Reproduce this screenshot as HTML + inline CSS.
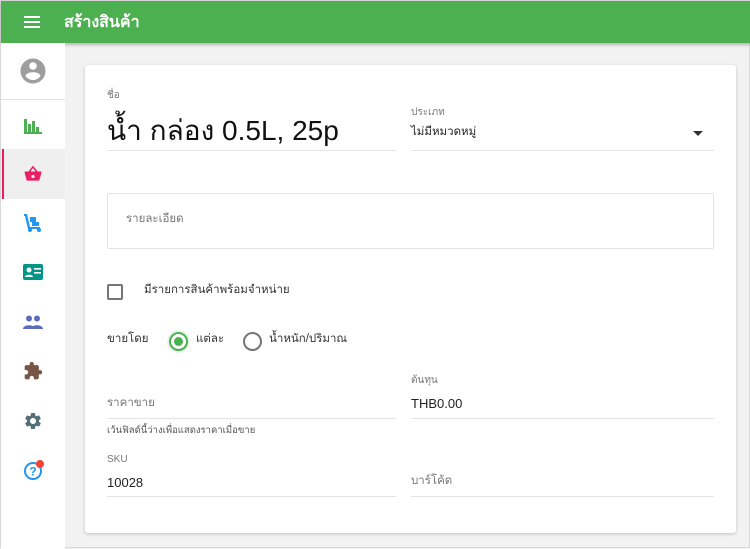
<!DOCTYPE html>
<html><head><meta charset="utf-8"><style>
*{margin:0;padding:0;box-sizing:border-box}
body{width:750px;height:548px;overflow:hidden;background:#f2f2f2;font-family:"Liberation Sans","Noto Sans CJK SC","WenQuanYi Zen Hei",sans-serif;position:relative;border:1px solid #d8d8d8}
.a{position:absolute;white-space:nowrap}
.hdr{left:0;top:0;width:750px;height:42px;background:#4caf50;box-shadow:0 2px 3px rgba(0,0,0,.25)}
.side{left:0;top:42px;width:64px;height:506px;background:#fff}
.card{left:84px;top:64px;width:651px;height:468px;background:#fff;border-radius:3px;box-shadow:0 1px 3px rgba(0,0,0,.2)}
.ul{height:1px;background:#e3e3e3}
.lbl{font-size:10px;color:#777}
.val{font-size:13px;color:#222}
.th{font-size:11.5px;color:#222}
.ph{font-size:11.5px;color:#777}
</style></head><body>
<div class="a hdr"></div>
<svg class="a" style="left:23px;top:14px" width="16" height="14"><rect y="1" width="16" height="2" fill="#fff"/><rect y="6" width="16" height="2" fill="#fff"/><rect y="11" width="16" height="2" fill="#fff"/></svg>
<div class="a" style="left:63px;top:9px;font-size:16px;font-weight:bold;color:#fff">สร้างสินค้า</div>
<div class="a side"></div>
<div class="a" style="left:0;top:98px;width:64px;height:1px;background:#e0e0e0"></div>
<div class="a" style="left:0;top:148px;width:64px;height:50px;background:#efefef"></div>
<div class="a" style="left:1px;top:148px;width:2px;height:50px;background:#e91e63"></div>
<svg class="a" style="left:17px;top:55px" width="30" height="30" viewBox="0 0 24 24"><path fill="#9e9e9e" d="M12 2C6.48 2 2 6.48 2 12s4.48 10 10 10 10-4.48 10-10S17.52 2 12 2zm0 3c1.66 0 3 1.34 3 3s-1.34 3-3 3-3-1.34-3-3 1.34-3 3-3zm0 14.2c-2.5 0-4.710-1.28-6-3.22.03-1.99 4-3.08 6-3.08 1.99 0 5.970 1.09 6 3.08-1.29 1.94-3.5 3.22-6 3.22z"/></svg>
<svg class="a" style="left:23px;top:117px" width="18" height="16"><g fill="#4caf50"><rect x="0" y="1" width="3" height="14"/><rect x="4" y="6" width="3" height="9"/><rect x="8" y="3" width="3" height="12"/><rect x="12" y="9" width="3" height="6"/><rect x="0" y="14" width="18" height="2"/></g></svg>
<svg class="a" style="left:22px;top:163px" width="20" height="20" viewBox="0 0 24 24"><path fill="#e91e63" d="M12 2 6.5 9H2v2l2.5 9h15L22 11V9h-4.5L12 2zm0 2.8L15 9H9l3-4.2zM12 13a2 2 0 1 1 0 4 2 2 0 0 1 0-4z"/></svg>
<svg class="a" style="left:22px;top:212px" width="20" height="20" viewBox="0 0 20 20"><g fill="#2196f3"><path d="M1 1h3l3 13h10v2H5L2 3H1z"/><rect x="7" y="4" width="6" height="5"/><rect x="9" y="9" width="7" height="4"/><circle cx="7" cy="17" r="2"/><circle cx="16" cy="17" r="2"/></g></svg>
<svg class="a" style="left:22px;top:263px" width="20" height="16"><rect width="20" height="16" rx="2" fill="#009688"/><circle cx="6" cy="6" r="2.5" fill="#fff"/><path d="M2 13c0-3 8-3 8 0z" fill="#fff"/><rect x="11" y="4" width="7" height="1.6" fill="#fff"/><rect x="11" y="8" width="7" height="1.6" fill="#fff"/></svg>
<svg class="a" style="left:22px;top:314px" width="20" height="14"><g fill="#5c6bc0"><circle cx="6" cy="3.5" r="3"/><circle cx="14" cy="3.5" r="3"/><path d="M0 14c0-5 12-5 12 0z"/><path d="M8 14c0-5 12-5 12 0z"/></g></svg>
<svg class="a" style="left:22px;top:360px" width="20" height="20" viewBox="0 0 24 24"><path fill="#795548" d="M20.5 11H19V7c0-1.1-.9-2-2-2h-4V3.5a2.5 2.5 0 0 0-5 0V5H4c-1.1 0-2 .9-2 2v3.8h1.5c1.5 0 2.7 1.2 2.7 2.7S5 16.2 3.5 16.2H2V20c0 1.1.9 2 2 2h3.8v-1.5c0-1.5 1.2-2.7 2.7-2.7s2.7 1.200 2.7 2.7V22H17c1.1 0 2-.9 2-2v-4h1.5a2.5 2.5 0 0 0 0-5z"/></svg>
<svg class="a" style="left:22px;top:410px" width="20" height="20" viewBox="0 0 24 24"><path fill="#546e7a" d="M19.14 12.94c.04-.3.06-.61.06-.94 0-.32-.02-.64-.07-.94l2.03-1.58a.49.49 0 0 0 .12-.61l-1.92-3.32a.488.488 0 0 0-.59-.22l-2.39.96c-.5-.38-1.030-.7-1.62-.94l-.36-2.54a.484.484 0 0 0-.48-.41h-3.84c-.24 0-.43.17-.47.41l-.36 2.54c-.59.24-1.13.57-1.62.94l-2.39-.96c-.22-.08-.47 0-.59.22L2.74 8.87c-.12.21-.08.47.12.61l2.03 1.58c-.05.3-.09.63-.09.94s.02.64.07.94l-2.03 1.58a.49.49 0 0 0-.12.61l1.92 3.32c.12.22.37.29.59.22l2.39-.96c.5.38 1.03.7 1.62.94l.36 2.54c.05.24.24.41.48.41h3.84c.24 0 .44-.17.47-.41l.36-2.54c.59-.24 1.13-.56 1.62-.94l2.39.96c.22.08.47 0 .59-.22l1.92-3.32c.12-.22.07-.47-.12-.61l-2.01-1.58zM12 15.6c-1.98 0-3.6-1.62-3.6-3.6s1.62-3.6 3.6-3.6 3.6 1.62 3.6 3.6-1.62 3.6-3.6 3.6z"/></svg>
<svg class="a" style="left:22px;top:458px" width="22" height="22" viewBox="0 0 22 22"><circle cx="10" cy="12" r="8" fill="none" stroke="#2196f3" stroke-width="2"/><text x="10" y="16.5" font-size="12" font-weight="bold" fill="#2196f3" text-anchor="middle" font-family="Liberation Sans">?</text><circle cx="17" cy="5" r="4" fill="#f44336"/></svg>

<div class="a card"></div>
<div class="a lbl" style="left:106px;top:87px">ชื่อ</div>
<div class="a" style="left:106px;top:108px;font-size:28px;color:#111">น้ำ กล่อง 0.5L, 25p</div>
<div class="a ul" style="left:106px;top:149px;width:289px"></div>
<div class="a lbl" style="left:410px;top:104px">ประเภท</div>
<div class="a th" style="left:410px;top:122px">ไม่มีหมวดหมู่</div>
<svg class="a" style="left:692px;top:130px" width="10" height="6"><path d="M0 0h10L5 5z" fill="#333"/></svg>
<div class="a ul" style="left:410px;top:149px;width:303px"></div>
<div class="a" style="left:106px;top:192px;width:607px;height:56px;border:1px solid #e3e3e3;border-radius:2px"></div>
<div class="a ph" style="left:125px;top:209px">รายละเอียด</div>
<div class="a" style="left:106px;top:283px;width:16px;height:16px;border:2px solid #757575;border-radius:2px"></div>
<div class="a th" style="left:143px;top:280px;color:#333">มีรายการสินค้าพร้อมจำหน่าย</div>
<div class="a th" style="left:106px;top:329px;color:#333">ขายโดย</div>
<div class="a" style="left:168px;top:331px;width:19px;height:19px;border:2px solid #4caf50;border-radius:50%;box-shadow:0 0 0 2px #e8f5e9"></div>
<div class="a" style="left:173px;top:336px;width:9px;height:9px;background:#4caf50;border-radius:50%"></div>
<div class="a th" style="left:195px;top:329px;color:#333">แต่ละ</div>
<div class="a" style="left:242px;top:331px;width:19px;height:19px;border:2px solid #757575;border-radius:50%"></div>
<div class="a th" style="left:268px;top:329px;color:#333">น้ำหนัก/ปริมาณ</div>
<div class="a lbl" style="left:410px;top:372px">ต้นทุน</div>
<div class="a ph" style="left:106px;top:393px">ราคาขาย</div>
<div class="a val" style="left:410px;top:395px">THB0.00</div>
<div class="a ul" style="left:106px;top:417px;width:289px"></div>
<div class="a ul" style="left:410px;top:417px;width:303px"></div>
<div class="a" style="left:106px;top:422px;font-size:9.5px;color:#555">เว้นฟิลด์นี้ว่างเพื่อแสดงราคาเมื่อขาย</div>
<div class="a lbl" style="left:106px;top:453px">SKU</div>
<div class="a val" style="left:106px;top:474px">10028</div>
<div class="a ph" style="left:410px;top:471px">บาร์โค้ด</div>
<div class="a ul" style="left:106px;top:495px;width:289px"></div>
<div class="a ul" style="left:410px;top:495px;width:303px"></div>
</body></html>
